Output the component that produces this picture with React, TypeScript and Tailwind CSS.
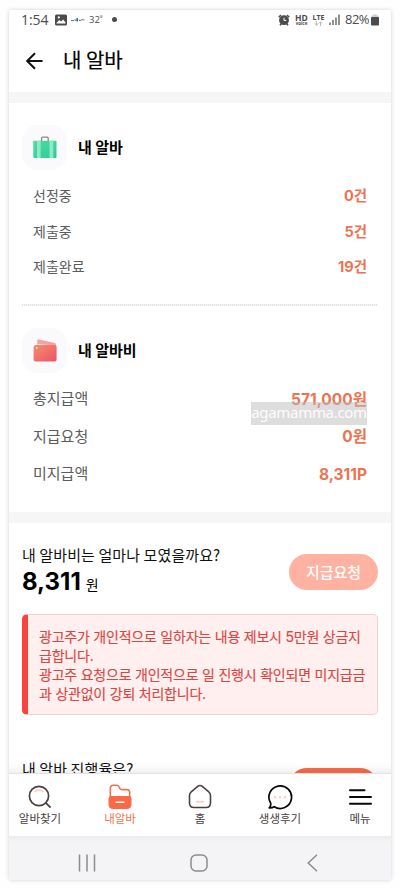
import type { ReactNode } from "react";

const KR = "font-['Noto_Sans_CJK_KR',sans-serif]";
const MIX = "font-['Inter','Noto_Sans_CJK_KR',sans-serif]";

function StatusBar() {
  return (
    <div className="flex h-[19px] shrink-0 items-center justify-between pl-[12px] pr-[12px] text-[#4c4c4c] font-['Open_Sans','Noto_Sans',sans-serif]">
      <div className="flex h-full items-center">
        <span className="w-[29px] text-[14px] leading-[19px] tracking-[-0.1px]">1:54</span>
        <svg className="ml-[5px]" width="12" height="12" viewBox="0 0 12 12">
          <rect x="0" y="0.5" width="12" height="11" rx="1.5" fill="#4c4c4c" />
          <path d="M1.5 9 4.2 6 6.2 7.6 8.2 5.6 10.5 8.5V9.5H1.5Z" fill="#fff" />
          <circle cx="3.8" cy="3.4" r="1.1" fill="#fff" />
        </svg>
        <svg className="ml-[4px]" width="14" height="6" viewBox="0 0 14 6">
          <path d="M0 3.5H3L4 2.5 5 4 6 2.5M8 2.5 9 4 10 2.8H13.5" stroke="#777" strokeWidth="1" fill="none" />
          <path d="M6.2 1V4.5" stroke="#1678bd" strokeWidth="1.5" />
        </svg>
        <span className="ml-[4px] w-[16px] text-[9.5px] leading-[18px]">32˚</span>
        <span className="ml-[7px] size-[5px] rounded-full bg-[#4c4c4c]" />
      </div>
      <div className="flex h-full items-center">
        <svg width="12" height="12" viewBox="0 0 12 12">
          <path d="M0.8 3.2 3 1M11.2 3.2 9 1M2 11.2 3.5 9.5M10 11.2 8.5 9.5" stroke="#4c4c4c" strokeWidth="1.6" />
          <circle cx="6" cy="6.2" r="4.9" fill="#4c4c4c" />
          <path d="M6 3.7V6.4H8.2" stroke="#fff" fill="none" />
        </svg>
        <div className="ml-[5px] flex w-[13px] flex-col items-center font-bold">
          <span className="text-[8.5px] leading-[7px]">HD</span>
          <span className="text-[4.5px] leading-[5px]">voice</span>
        </div>
        <div className="ml-[4px] flex w-[13px] flex-col items-center font-bold">
          <span className="text-[7px] leading-[7px]">LTE</span>
          <svg width="9" height="5" viewBox="0 0 9 5">
            <path d="M2.5 0V4M.8 2.5 2.5 4.2 4.2 2.5M6.5 5V1M4.8 2.5 6.5.8 8.2 2.5" fill="none" stroke="#aaa" strokeWidth=".8" />
          </svg>
        </div>
        <svg className="ml-[4px]" width="11" height="11" viewBox="0 0 11 11">
          <path d="M1 8.5V11M4 6V11M7 3.5V11M10 0.5V11" stroke="#555" strokeWidth="1.3" />
        </svg>
        <span className="ml-[5px] w-[26px] text-[13px] leading-[19px] tracking-[-0.5px]">82%</span>
        <svg width="8" height="12" viewBox="0 0 8 12">
          <path d="M2.3 0.5H5.7V1.5H7.5V4H0.5V1.5H2.3Z" fill="#ccc" />
          <rect x="0" y="3" width="8" height="8.5" rx="1" fill="#4c4c4c" />
        </svg>
      </div>
    </div>
  );
}

function SectionHead({ icon, title }: { icon: ReactNode; title: string }) {
  return (
    <div className="flex h-[45px] items-center">
      <div className="flex size-[45px] items-center justify-center rounded-[16px] bg-[#fafafc]">{icon}</div>
      <h2 className={`ml-[11px] pb-[2px] text-[15px] font-bold leading-[22px] text-black ${KR}`}>{title}</h2>
    </div>
  );
}

function Row({ label, value, large }: { label: string; value: string; large?: boolean }) {
  return (
    <div className={`flex items-center justify-between pl-[11px] pr-[11px] ${large ? "h-[37.5px]" : "h-[35.7px]"}`}>
      <span className={`pb-[1px] text-[#5c5c5c] ${KR} ${large ? "text-[15px]" : "text-[14px]"}`}>{label}</span>
      <span className={`font-bold text-[#ee7351] ${MIX} ${large ? "pt-[1px] text-[15.5px]" : "text-[14.5px]"}`}>{value}</span>
    </div>
  );
}

function CaseIcon() {
  return (
    <svg width="24" height="24" viewBox="0 0 24 24">
      <defs>
        <linearGradient id="case" x1="0" y1="0" x2="1" y2="1">
          <stop offset="0" stopColor="#4bdca6" />
          <stop offset="1" stopColor="#32c998" />
        </linearGradient>
      </defs>
      <path d="M8.6 5.5V2.2Q8.6 1.2 9.6 1.2H14.2Q15.2 1.2 15.2 2.2V5.5" fill="none" stroke="#8b8888" strokeWidth="1.3" />
      <rect x="0.3" y="4.7" width="23.2" height="17.3" rx="0.8" fill="url(#case)" />
      <path d="M4 4.7H7.6V22H4ZM16.5 4.7H20.3V22H16.5Z" fill="#8cecc0" />
    </svg>
  );
}

function WalletIcon() {
  return (
    <svg width="24" height="24" viewBox="0 0 24 24">
      <defs>
        <linearGradient id="wallet" x1="0" y1="0" x2="1" y2="1">
          <stop offset="0" stopColor="#f3906c" />
          <stop offset="1" stopColor="#ec5268" />
        </linearGradient>
      </defs>
      <path d="M4.5 0.3 22 4Q23 4.5 23 7H4Z" fill="#f9a09b" />
      <path d="M4.6 4.7 17 6.2H4.5Z" fill="#fff" opacity=".75" />
      <rect x="0.6" y="6" width="23" height="16.5" rx="2" fill="url(#wallet)" />
      <circle cx="3.8" cy="9" r="1" fill="#ffd19b" />
    </svg>
  );
}

function NavItem({ icon, label, active }: { icon: ReactNode; label: string; active?: boolean }) {
  return (
    <div className="flex w-[80px] flex-col items-center pt-[9px]">
      <div className="flex h-[27px] items-center justify-center">{icon}</div>
      <span className={`text-[11.5px] leading-[16px] ${KR} ${active ? "text-[#f07552]" : "text-[#4a4040]"}`}>{label}</span>
    </div>
  );
}

export default function App() {
  return (
    <div className="h-[888px] w-[400px] overflow-hidden bg-[#fefefe] pl-[9px] pt-[10px]">
      <div className="flex h-[870px] w-[382px] flex-col overflow-hidden rounded-[2px] bg-white shadow-[0_0_4px_rgba(0,0,0,0.18)]">
        <StatusBar />
        <header className="flex h-[63px] shrink-0 items-center pl-[17px]">
          <svg width="17" height="18" viewBox="0 0 17 18">
            <path d="M9 1.2 1.2 9 9 16.8M1.2 9H16.5" fill="none" stroke="#111" strokeWidth="2" />
          </svg>
          <h1 className={`ml-[20px] pb-[1px] text-[20px] leading-[28px] text-black [-webkit-text-stroke:0.2px_black] ${KR}`}>내 알바</h1>
        </header>
        <div className="h-[11px] shrink-0 bg-[#f6f6f6]" />

        <section className="h-[201px] shrink-0 px-[13px] pt-[22px]">
          <SectionHead icon={<CaseIcon />} title="내 알바" />
          <div className="pt-[8px]">
            <Row label="선정중" value="0건" />
            <Row label="제출중" value="5건" />
            <Row label="제출완료" value="19건" />
          </div>
        </section>
        <div className="mx-[13px] h-[2px] shrink-0 bg-[repeating-linear-gradient(90deg,#e0e0e0_0_1px,#f8f8f8_1px_2px)]" />
        <section className="h-[206px] shrink-0 px-[13px] pt-[22px]">
          <SectionHead icon={<WalletIcon />} title="내 알바비" />
          <div className="relative pt-[7px]">
            <Row large label="총지급액" value="571,000원" />
            <Row large label="지급요청" value="0원" />
            <Row large label="미지급액" value="8,311P" />
            <div className="absolute right-[11px] top-[29px] flex h-[23px] w-[116px] justify-center whitespace-nowrap bg-[#bcbcbc]/50 font-['Noto_Sans',sans-serif] text-[15px] leading-[21px] tracking-[-0.3px] text-white/90">
              agamamma.com
            </div>
          </div>
        </section>
        <div className="h-[11px] shrink-0 bg-[#f6f6f6]" />

        <main className="h-[250px] shrink-0 overflow-hidden px-[13px]">
          <div className="flex h-[91px] items-start justify-between pt-[21px]">
            <div>
              <p className={`text-[15px] leading-[21px] text-[#111] tracking-[0.1px] ${KR}`}>내 알바비는 얼마나 모였을까요?</p>
              <div className="flex h-[30px] items-baseline pt-[2px] text-black">
                <strong className="font-['Inter',sans-serif] text-[24px] font-bold leading-[30px]">8,311</strong>
                <span className={`ml-[5px] text-[14px] leading-[20px] ${KR}`}>원</span>
              </div>
            </div>
            <button className={`mt-[10px] h-[36px] w-[89px] rounded-full bg-[#ffb2a1] text-[15px] font-medium text-white ${KR}`}>지급요청</button>
          </div>
          <div className={`h-[101px] rounded-[5px] border border-l-[6px] border-[#f6cfcf] border-l-[#fb423d] bg-[#fff0ef] pl-[11px] pt-[12px] text-[14px] leading-[19px] tracking-[-0.22px] text-[#d94743] [-webkit-text-stroke:0.15px_#d94743] ${MIX}`}>
            <p className="whitespace-nowrap">광고주가 개인적으로 일하자는 내용 제보시 5만원 상금지<br />급합니다.</p>
            <p className="whitespace-nowrap">광고주 요청으로 개인적으로 일 진행시 확인되면 미지급금<br />과 상관없이 강퇴 처리합니다.</p>
          </div>
          <div className="flex items-start justify-between pt-[43px]">
            <p className={`text-[15px] leading-[22px] tracking-[0.1px] text-[#111] ${KR}`}>내 알바 진행율은?</p>
            <div className="mt-[10px] h-[36px] w-[89px] rounded-full bg-[#fa6b48]" />
          </div>
        </main>

        <nav className="relative -ml-[9px] flex h-[63px] w-[400px] shrink-0 border-t border-[#e2e2e2] bg-white shadow-[0_-2px_10px_rgba(0,0,0,0.09)]">
          <NavItem label="알바찾기" icon={
            <svg width="24" height="26" viewBox="0 0 24 26" fill="none">
              <circle cx="11" cy="12" r="9.6" stroke="#4a4040" strokeWidth="1.7" />
              <path d="m17.8 18.8 4.8 4.8" stroke="#4a4040" strokeWidth="1.8" />
              <path d="M6.5 8.2Q11 3.8 15.5 8.2" stroke="#ffc8c2" strokeWidth="1.5" />
            </svg>
          } />
          <NavItem active label="내알바" icon={
            <svg width="24" height="26" viewBox="0 0 24 26" fill="none">
              <path d="M2.3 15V4.2Q2.3 1.2 5.3 1.2H8.5Q10.3 1.2 11 2.8L12 4.6Q12.5 5.6 14 5.6H18.7Q21.7 5.6 21.7 8.6V15" stroke="#f4734f" strokeWidth="1.6" />
              <path d="M3.5 12H20.5Q23.5 12 23.5 15V20Q23.5 25 18.5 25H5.5Q.5 25 .5 20V15Q.5 12 3.5 12Z" fill="#fb6947" />
              <path d="M7.5 18.3H16.5" stroke="#fff" strokeWidth="1.6" />
            </svg>
          } />
          <NavItem label="홈" icon={
            <svg width="24" height="26" viewBox="0 0 24 26" fill="none">
              <path d="M10 2.2Q12 .8 14 2.2L20.8 7.8Q22.5 9.2 22.5 11.5V19Q22.5 23.5 18 23.5H6Q1.5 23.5 1.5 19V11.5Q1.5 9.2 3.2 7.8Z" stroke="#4a4040" strokeWidth="1.6" />
              <path d="M8 17.8H16" stroke="#ffc8c2" strokeWidth="1.5" />
            </svg>
          } />
          <NavItem label="생생후기" icon={
            <svg width="26" height="26" viewBox="0 0 26 26" fill="none">
              <path d="M3.7 19.2A11.3 11.3 0 1 1 7.2 22.7Q5 24.2 2.2 23.9 4.1 22.4 3.7 19.2Z" stroke="#080808" strokeWidth="1.7" strokeLinejoin="round" />
              <path d="M7 13.2H9M12 13.2H14M17 13.2H19" stroke="#ffc5bd" strokeWidth="2" />
            </svg>
          } />
          <NavItem label="메뉴" icon={
            <svg width="24" height="26" viewBox="0 0 24 26">
              <path d="M2 6.2H16.5M2 13H23M2 19.8H23" stroke="#080808" strokeWidth="2" strokeLinecap="round" />
            </svg>
          } />
        </nav>
        <div className="flex h-[44px] shrink-0 items-center justify-between bg-[#f4f4f7] pl-[69px] pr-[73px] pt-[9px]">
          <svg width="18" height="18" viewBox="0 0 18 18">
            <path d="M1.5 .5V17.5M9 .5V17.5M16.5 .5V17.5" stroke="#8c8c8f" strokeWidth="1.5" />
          </svg>
          <svg className="-ml-[5px]" width="18" height="18" viewBox="0 0 18 18">
            <rect x="1" y="1" width="16" height="16" rx="5" fill="none" stroke="#8c8c8f" strokeWidth="1.5" />
          </svg>
          <svg width="11" height="18" viewBox="0 0 11 18">
            <path d="M10 .7 1.2 9 10 17.3" fill="none" stroke="#8c8c8f" strokeWidth="1.5" />
          </svg>
        </div>
      </div>
    </div>
  );
}
